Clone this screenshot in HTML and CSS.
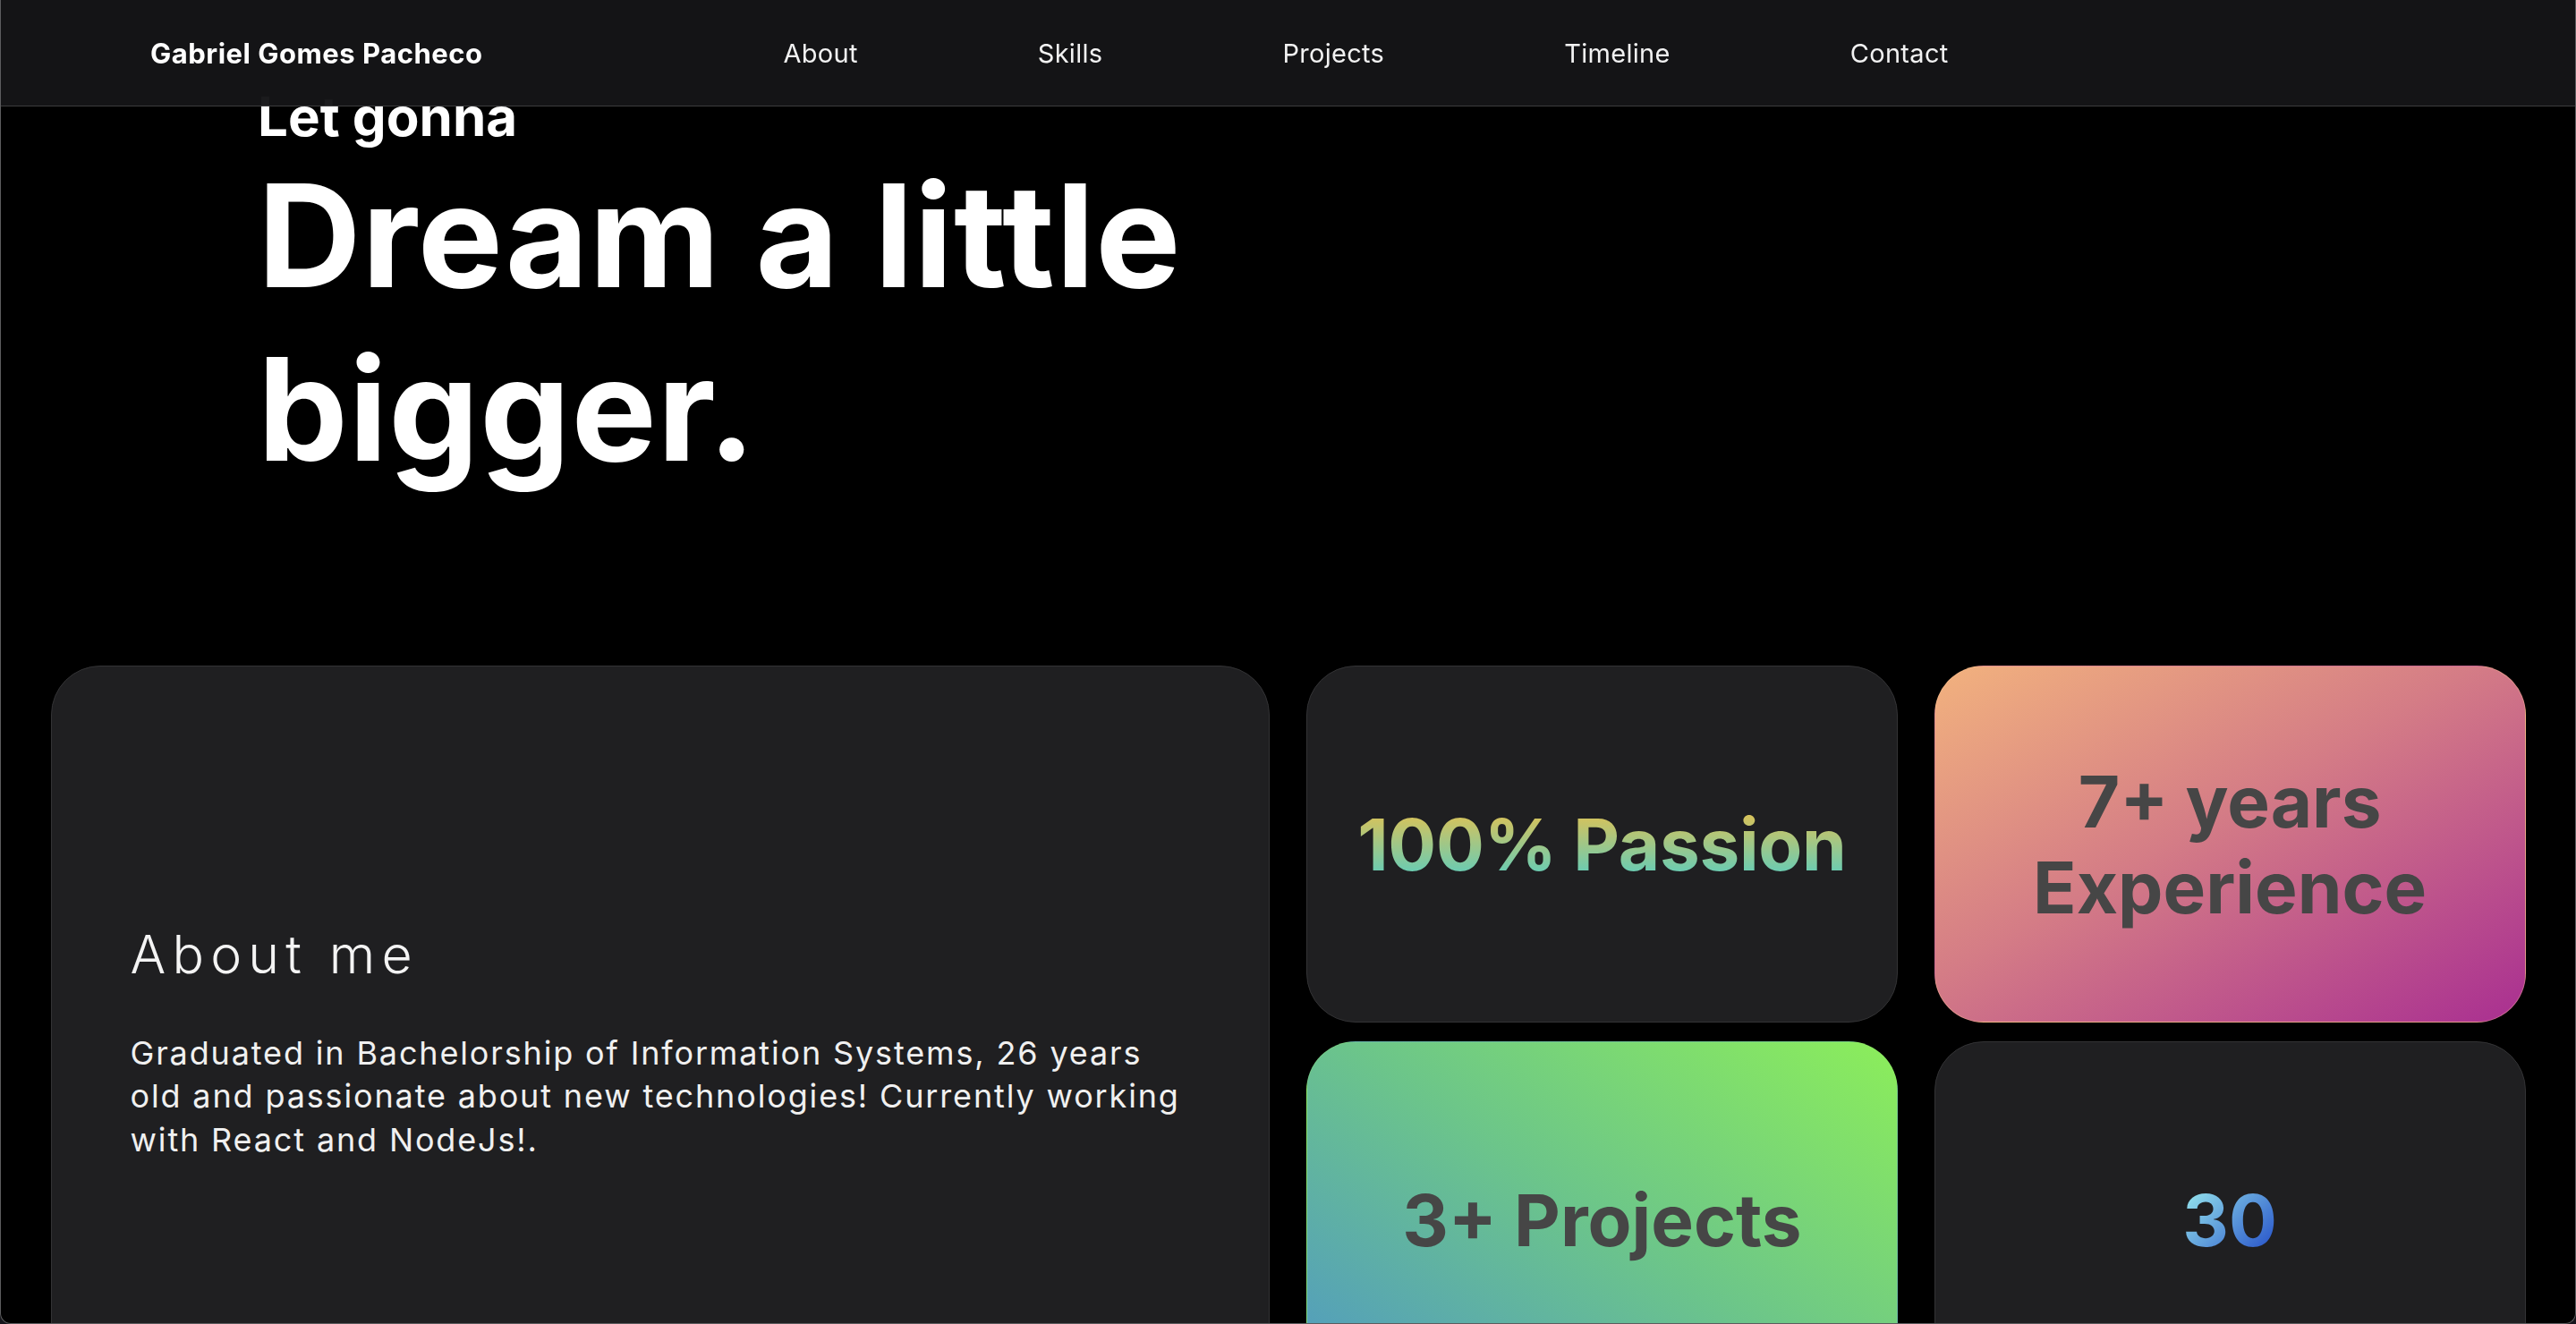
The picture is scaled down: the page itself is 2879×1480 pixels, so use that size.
FILE: index.html
```html
<!DOCTYPE html>
<html lang="en">
<head>
<meta charset="utf-8">
<title>Gabriel Gomes Pacheco</title>
<link rel="stylesheet" href="styles.css">
</head>
<body>
<header class="nav">
  <a class="brand" href="#">Gabriel Gomes Pacheco</a>
  <nav class="links">
    <a href="#about">About</a>
    <a href="#skills">Skills</a>
    <a href="#projects">Projects</a>
    <a href="#timeline">Timeline</a>
    <a href="#contact">Contact</a>
  </nav>
</header>
<main class="page">
  <section class="hero">
    <p class="kicker">Let gonna</p>
    <h1 class="headline">Dream a little bigger.</h1>
  </section>
  <section class="bento" id="about">
    <article class="card card-about">
      <h2 class="about-title">About me</h2>
      <p class="about-text">Graduated in Bachelorship of Information Systems, 26 years old and passionate about new technologies! Currently working with React and NodeJs!.</p>
    </article>
    <div class="card card-stat"><span class="stat stat-passion">100% Passion</span></div>
    <div class="card card-stat card-sunset"><span class="stat stat-dark">7+ years Experience</span></div>
    <div class="card card-stat card-meadow"><span class="stat stat-dark">3+ Projects</span></div>
    <div class="card card-stat"><span class="stat stat-ocean">30</span></div>
  </section>
</main>
<div class="frame"></div>
</body>
</html>
```
FILE: styles.css
```css
* { box-sizing: border-box; }

html, body {
  margin: 0;
  height: 100%;
  overflow: hidden;
  background: #000;
}

body {
  font-family: "Inter", "Noto Sans", sans-serif;
  color: #fff;
}

.nav {
  position: fixed;
  top: 0;
  left: 0;
  right: 0;
  height: 119px;
  display: flex;
  align-items: center;
  padding-left: 168px;
  background: rgba(22, 22, 24, 0.93);
  backdrop-filter: blur(30px);
  -webkit-backdrop-filter: blur(30px);
  border-bottom: 1.5px solid #3c3c3e;
  z-index: 10;
}

.brand {
  font-size: 31px;
  font-weight: 700;
  color: #fff;
  text-decoration: none;
  letter-spacing: 0.5px;
}

.links {
  display: flex;
  gap: 201px;
  margin-left: 336px;
}

.links a {
  font-size: 29px;
  font-weight: 400;
  color: #f2f2f2;
  text-decoration: none;
  letter-spacing: 0.3px;
}

.hero {
  padding: 94px 0 0 288px;
}

.kicker {
  margin: 0;
  font-size: 60px;
  line-height: 72px;
  font-weight: 700;
}

.headline {
  margin: 0;
  max-width: 1200px;
  font-size: 160px;
  line-height: 194px;
  font-weight: 700;
  letter-spacing: 1px;
}

.bento {
  margin-top: 190px;
  padding: 0 56.5px;
  display: grid;
  grid-template-columns: repeat(4, 1fr);
  grid-auto-rows: 399px;
  column-gap: 41px;
  row-gap: 21px;
}

.card {
  border-radius: 55px;
  background: #1f1f21;
  border: 1.5px solid #333335;
  display: flex;
  align-items: center;
  justify-content: center;
}

.card-about {
  grid-column: span 2;
  grid-row: span 2;
  flex-direction: column;
  align-items: flex-start;
  padding: 22px 60px 0 88px;
}

.about-title {
  margin: 0;
  font-size: 59px;
  line-height: 71px;
  font-weight: 300;
  letter-spacing: 7.2px;
  color: #f4f4f4;
}

.about-text {
  margin: 51px 0 0;
  max-width: 1192px;
  font-size: 36px;
  line-height: 48.5px;
  font-weight: 400;
  letter-spacing: 1.85px;
  color: #f0f0f0;
}

.stat {
  font-size: 80px;
  line-height: 96px;
  font-weight: 700;
  text-align: center;
}

.stat-passion {
  letter-spacing: -0.3px;
  background: linear-gradient(180deg, #d8c25a 15%, #66ccb6 85%);
  -webkit-background-clip: text;
  background-clip: text;
  color: transparent;
}

.stat-ocean {
  background: linear-gradient(135deg, #8edbea 15%, #2e5ccc 85%);
  -webkit-background-clip: text;
  background-clip: text;
  color: transparent;
}

.stat-dark {
  color: #464646;
}

.card-sunset {
  border-color: rgba(255, 200, 150, 0.35);
  background: linear-gradient(150deg, #f2b27e 0%, #d47c86 45%, #a92f91 100%);
}

.card-meadow {
  border-color: rgba(150, 230, 120, 0.3);
  background: linear-gradient(35deg, #4f98c4 0%, #6cc58a 50%, #8cee5a 100%);
}

.frame {
  position: fixed;
  inset: 0;
  border: 1.5px solid #5c5c5e;
  border-top: 0;
  border-radius: 0 0 12px 12px;
  box-shadow: 0 0 0 30px #15151b;
  pointer-events: none;
  z-index: 20;
}
```
